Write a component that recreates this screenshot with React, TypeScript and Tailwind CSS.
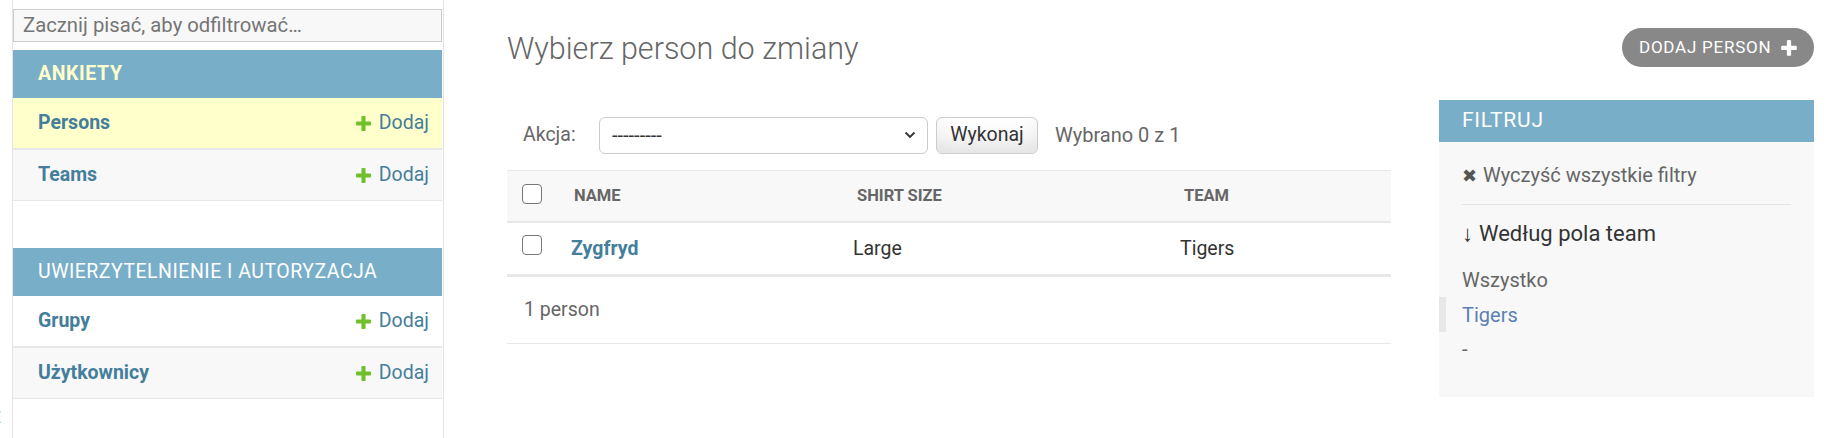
import React from "react";

const PlusIcon = ({ color, size }: { color: string; size: number }) => (
  <svg width={size} height={size} viewBox="0 0 1792 1792" aria-hidden="true">
    <path
      fill={color}
      d="M1600 796v192q0 40-28 68t-68 28h-416v416q0 40-28 68t-68 28h-192q-40 0-68-28t-28-68v-416h-416q-40 0-68-28t-28-68v-192q0-40 28-68t68-28h416v-416q0-40 28-68t68-28h192q40 0 68 28t28 68v416h416q40 0 68 28t28 68z"
    />
  </svg>
);

const Checkbox = ({ extra }: { extra: string }) => (
  <div className={"w-[20px] h-[20px] rounded-[4px] border-[1.5px] border-[#767676] bg-white " + extra} />
);

function SideRow({ name, bg, border }: { name: string; bg: string; border: string }) {
  return (
    <div className={"h-[50px] flex items-center justify-between pl-[25px] pr-[13px] box-content " + bg + " " + border}>
      <span className="text-[19.5px] font-bold text-[#447e9b]">{name}</span>
      <span className="flex items-center gap-[6px]">
        <PlusIcon color="#70bf2b" size={19} />
        <span className="text-[19.5px] text-[#447e9b]">Dodaj</span>
      </span>
    </div>
  );
}

export default function App() {
  return (
    <div className="flex h-[438px] w-[1833px] overflow-hidden bg-white font-['Roboto','Liberation_Sans',sans-serif] text-[#333]">
      {/* toggle column */}
      <div className="w-[13px] shrink-0 border-r border-[#e4e4e4] overflow-hidden flex flex-col justify-end pb-[8px]">
        <span className="text-[#79aec8] text-[30px] leading-[30px] -ml-[12px]">«</span>
      </div>

      {/* sidebar */}
      <nav className="w-[431px] shrink-0 border-r border-[#e4e4e4] flex flex-col pr-[1px]">
        <div className="pt-[9px]">
          <div className="h-[33px] border border-[#cccccc] bg-[#f8f8f8] flex items-center pl-[9px] text-[20.3px] text-[#757575]">
            Zacznij pisać, aby odfiltrować…
          </div>
        </div>

        <div className="mt-[8px]">
          <div className="h-[48px] bg-[#79aec8] flex items-center pl-[25px] text-[19.5px] font-bold tracking-[0.6px] text-[#ffffcc]">
            ANKIETY
          </div>
          <SideRow name="Persons" bg="bg-[#ffffcc]" border="border-b-2 border-[#e8e8e8]" />
          <SideRow name="Teams" bg="bg-[#f8f8f8]" border="border-b border-[#e8e8e8]" />
        </div>

        <div className="mt-[47px]">
          <div className="h-[48px] bg-[#79aec8] flex items-center pl-[25px] text-[19.5px] tracking-[0.5px] text-white">
            UWIERZYTELNIENIE I AUTORYZACJA
          </div>
          <SideRow name="Grupy" bg="bg-white" border="border-b-2 border-[#e8e8e8]" />
          <SideRow name="Użytkownicy" bg="bg-[#f8f8f8]" border="border-b border-[#e8e8e8]" />
        </div>
      </nav>

      {/* main content */}
      <main className="flex-1 pl-[63px] pr-[19px] pt-[28px] flex flex-col">
        <div className="flex justify-between items-start">
          <h1 className="h-[42px] flex items-center text-[30.5px] font-light text-[#666]">Wybierz person do zmiany</h1>
          <div className="h-[39px] w-[192px] rounded-full bg-[#888888] flex items-center pl-[17px] pr-[15px] justify-between">
            <span className="text-[17px] font-normal tracking-[0.75px] text-white">DODAJ PERSON</span>
            <PlusIcon color="#ffffff" size={20} />
          </div>
        </div>

        <div className="flex mt-[30px]">
          {/* changelist */}
          <div className="flex-1 flex flex-col">
            <div className="h-[70px] flex items-center pl-[16px] text-[19.5px] text-[#666]">
              <span className="w-[76px]">Akcja:</span>
              <div className="w-[329px] h-[37px] border border-[#cccccc] rounded-[6px] bg-white flex items-center justify-between pl-[12px] pr-[11px]">
                <span className="text-[20px] text-[#333]">---------</span>
                <svg width="12" height="8" viewBox="0 0 12 8" aria-hidden="true">
                  <polyline points="1.5,1.5 6,6 10.5,1.5" fill="none" stroke="#333" strokeWidth="1.8" />
                </svg>
              </div>
              <div className="ml-[8px] w-[102px] h-[37px] border border-[#cccccc] rounded-[6px] bg-white shadow-[inset_0_-22px_30px_-15px_rgba(0,0,0,0.15)] flex items-center justify-center text-[19.5px] text-[#333]">
                Wykonaj
              </div>
              <span className="ml-[17px] text-[20px]">Wybrano 0 z 1</span>
            </div>

            {/* header row */}
            <div className="h-[50px] box-content bg-[#f8f8f8] border-t border-b-2 border-[#e8e8e8] flex items-center">
              <div className="w-[52px] pl-[15px] flex items-center">
                <Checkbox extra="mb-[4px]" />
              </div>
              <div className="w-[282px] pl-[15px] text-[16.5px] font-bold text-[#666]">NAME</div>
              <div className="w-[327px] pl-[16px] text-[16.5px] font-bold text-[#666]">SHIRT SIZE</div>
              <div className="flex-1 pl-[16px] text-[16.5px] font-bold text-[#666]">TEAM</div>
            </div>

            {/* data row */}
            <div className="h-[51px] box-content bg-white border-b-2 border-[#e8e8e8] flex items-center">
              <div className="w-[52px] pl-[15px] flex items-center">
                <Checkbox extra="mb-[8px]" />
              </div>
              <div className="w-[282px] pl-[12px] text-[19.5px] font-bold text-[#447e9b]">Zygfryd</div>
              <div className="w-[327px] pl-[12px] text-[19.5px] text-[#333]">Large</div>
              <div className="flex-1 pl-[12px] text-[19.5px] text-[#333]">Tigers</div>
            </div>

            {/* paginator */}
            <div className="h-[66px] box-content border-t border-b border-[#e8e8e8] flex items-center pl-[17px] text-[19.5px] text-[#666]">
              1 person
            </div>
          </div>

          {/* filter */}
          <aside className="w-[375px] ml-[48px] shrink-0 self-start bg-[#f8f8f8] pb-[31px]">
            <div className="h-[42px] bg-[#79aec8] flex items-center px-[23px] text-[21px] tracking-[0.75px] text-white">
              FILTRUJ
            </div>
            <div className="px-[23px]">
              <div className="mt-[18px] h-[30px] flex items-center text-[20px] text-[#666] border-b border-[#e4e4e4] box-content pb-[14px]">
                <span className="text-[#555] mr-[6px] text-[18px]">✖</span>
                Wyczyść wszystkie filtry
              </div>
              <div className="mt-[13px] h-[30px] flex items-center text-[22px] text-[#333]">
                <span className="mr-[6px]">↓</span>Według pola team
              </div>
            </div>
            <ul className="mt-[15px]">
              <li className="h-[34px] flex items-center pl-[23px] text-[20px] text-[#666]">Wszystko</li>
              <li className="h-[35px] flex items-center pl-[16px] border-l-[7px] border-[#e8e8e8] text-[20px] text-[#5b80b2]">Tigers</li>
              <li className="h-[34px] flex items-center pl-[23px] text-[20px] text-[#666]">-</li>
            </ul>
          </aside>
        </div>
      </main>
    </div>
  );
}
